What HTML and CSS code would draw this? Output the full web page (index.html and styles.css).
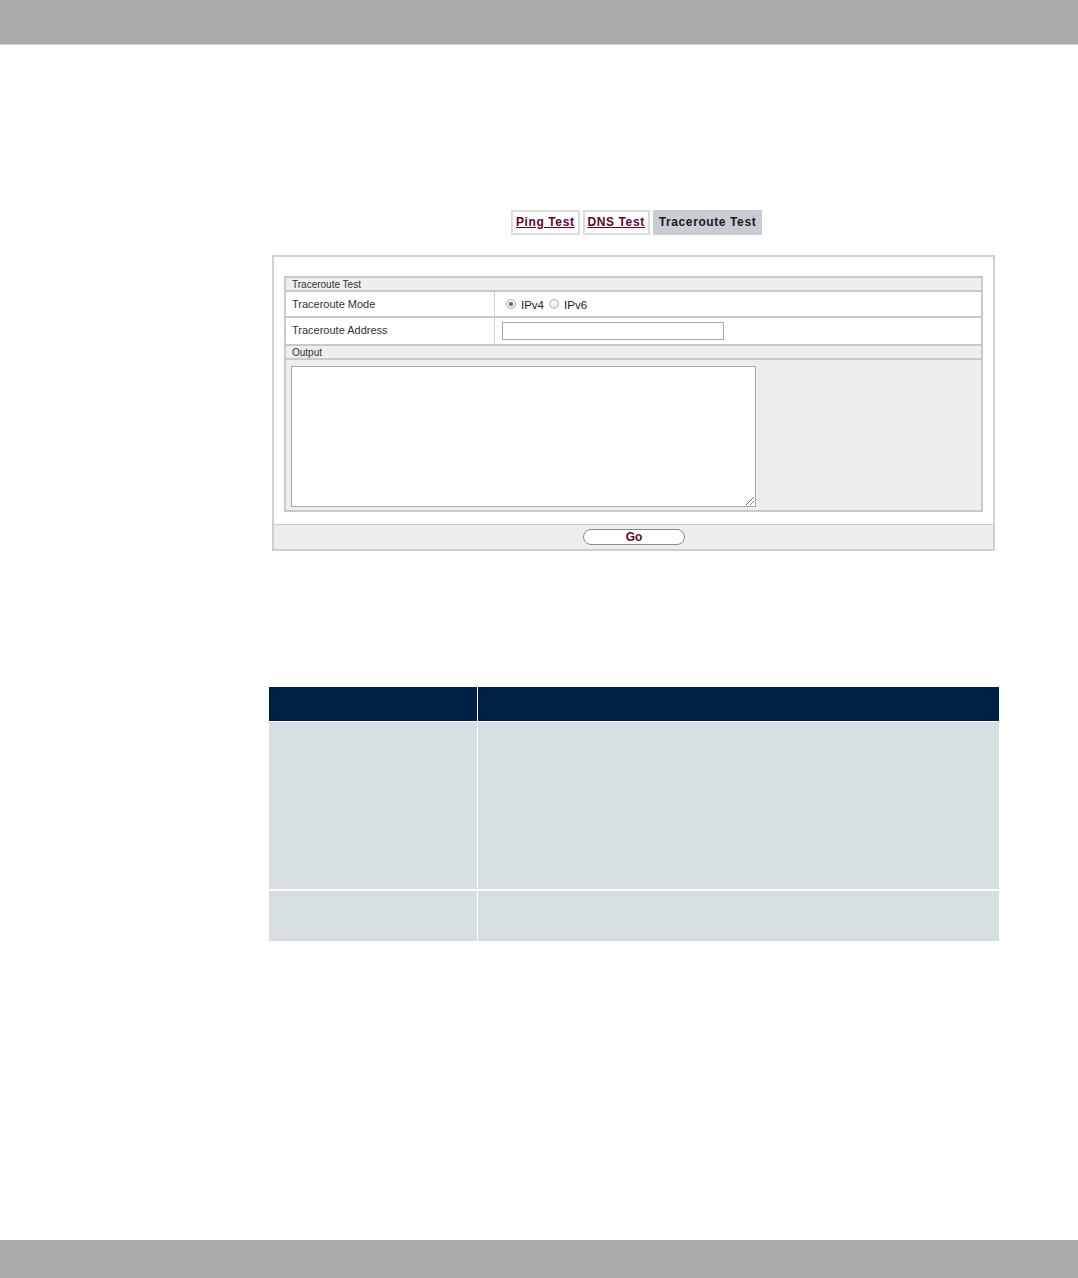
FILE: index.html
```html
<!DOCTYPE html>
<html>
<head>
<meta charset="utf-8">
<link rel="stylesheet" href="styles.css">
</head>
<body>
<div class="page">
  <div class="topbar"></div>
  <div class="content">
    <div class="tabs">
      <a class="tab" href="#">Ping Test</a>
      <a class="tab" href="#">DNS Test</a>
      <span class="tab active">Traceroute Test</span>
    </div>
    <div class="panel">
      <div class="inner">
        <div class="sect">Traceroute Test</div>
        <div class="row">
          <div class="lbl">Traceroute Mode</div>
          <div class="val radios">
            <span class="radio checked"></span><span class="rtext">IPv4</span>
            <span class="radio"></span><span class="rtext">IPv6</span>
          </div>
        </div>
        <div class="row row-addr">
          <div class="lbl">Traceroute Address</div>
          <div class="val"><span class="input"></span></div>
        </div>
        <div class="sect">Output</div>
        <div class="output">
          <div class="textarea"><span class="grip"></span></div>
        </div>
      </div>
      <div class="gobar"><span class="gobtn">Go</span></div>
    </div>
    <div class="table">
      <div class="th c1"></div>
      <div class="th c2"></div>
      <div class="td c1 r1"></div>
      <div class="td c2 r1"></div>
      <div class="td c1 r2"></div>
      <div class="td c2 r2"></div>
    </div>
  </div>
  <div class="bottombar"></div>
</div>
</body>
</html>
```
FILE: styles.css
```css
html, body {
  margin: 0;
  padding: 0;
  background: #ffffff;
}
.page {
  width: 1078px;
  height: 1278px;
  display: flex;
  flex-direction: column;
  font-family: "Liberation Sans", Arial, sans-serif;
}
.topbar {
  height: 44px;
  background: #aaaaaa;
  border-bottom: 1px solid #d4d4d4;
  flex: none;
}
.bottombar {
  height: 38px;
  background: #aaaaaa;
  flex: none;
}
.content {
  flex: 1;
  padding-left: 269px;
  width: 730px;
}
.tabs {
  margin-top: 165px;
  display: flex;
  gap: 2px;
  padding-left: 242px;
  height: 25px;
}
.tab {
  box-sizing: border-box;
  height: 25px;
  padding: 0 3px;
  border: 2px solid #dcdcdc;
  background: #fff;
  font-size: 12px;
  font-weight: bold;
  line-height: 21px;
  color: #660033;
  text-decoration: underline;
  letter-spacing: 0.6px;
}
.tab + .tab {
  margin-left: 1px;
}
.tab.active {
  background: #c7cdd4;
  border-color: #c7cdd4;
  color: #1a1a1a;
  text-decoration: none;
  padding: 0 4px;
}
.panel {
  margin-top: 20px;
  margin-left: 3px;
  width: 723px;
  box-sizing: border-box;
  border: 2px solid #d0d0d0;
  background: #fff;
}
.inner {
  margin: 19px 10px 12px 10px;
  border: 2px solid #c9c9c9;
  font-size: 11px;
  color: #333;
}
.sect {
  height: 12px;
  line-height: 13px;
  background: #eeeeee;
  padding-left: 6px;
  font-size: 10px;
  border-bottom: 2px solid #c9c9c9;
}
.row {
  display: flex;
  height: 24px;
  border-bottom: 2px solid #c9c9c9;
}
.row-addr {
  height: 26px;
}
.lbl {
  width: 202px;
  flex: none;
  padding-left: 6px;
  line-height: 24px;
  border-right: 1px solid #cfcfcf;
}
.val {
  display: flex;
  align-items: center;
  padding-left: 7px;
}
.radios {
  padding-left: 11px;
  padding-top: 2px;
}
.radio {
  width: 10px;
  height: 10px;
  border-radius: 50%;
  box-sizing: border-box;
  border: 1px solid #b5b5b5;
  background: radial-gradient(circle at 50% 40%, #ffffff, #d8d8d8);
  display: inline-block;
  position: relative;
  margin-right: 5px;
  margin-top: -2px;
}
.radio.checked::after {
  content: "";
  position: absolute;
  left: 2px;
  top: 2px;
  width: 4px;
  height: 4px;
  border-radius: 50%;
  background: #666;
}
.rtext {
  margin-right: 5px;
  color: #222;
  font-size: 11.5px;
}
.input {
  display: block;
  width: 222px;
  height: 18px;
  box-sizing: border-box;
  border: 1px solid #a9a9a9;
  background: #fff;
}
.output {
  background: #eeeeee;
  height: 150px;
  padding: 6px 0 0 5px;
  box-sizing: border-box;
}
.textarea {
  width: 465px;
  height: 141px;
  box-sizing: border-box;
  border: 1px solid #a9a9a9;
  background: #fff;
  position: relative;
}
.grip {
  position: absolute;
  right: 1px;
  bottom: 1px;
  width: 8px;
  height: 8px;
  background: linear-gradient(135deg, transparent 45%, #777 45%, #777 52%, transparent 52%, transparent 70%, #777 70%, #777 77%, transparent 77%);
}
.gobar {
  height: 24px;
  background: #eeeeee;
  border-top: 1px solid #d0d0d0;
  display: flex;
  justify-content: center;
  align-items: center;
}
.gobtn {
  box-sizing: border-box;
  width: 102px;
  height: 16px;
  border: 1px solid #8a8a8a;
  border-radius: 8px;
  background: #fff;
  text-align: center;
  font-size: 12px;
  font-weight: bold;
  line-height: 14px;
  color: #5a0a2e;
  margin-left: 1px;
}
.table {
  margin-top: 136px;
  display: grid;
  grid-template-columns: 208px 521px;
  grid-template-rows: 34px 167px 51px;
  column-gap: 1px;
  row-gap: 1px;
  width: 730px;
  background: #ffffff;
}
.th {
  background: #002147;
}
.td {
  background: #d7dee2;
}
.r2 {
  margin-top: 1px;
}
```
